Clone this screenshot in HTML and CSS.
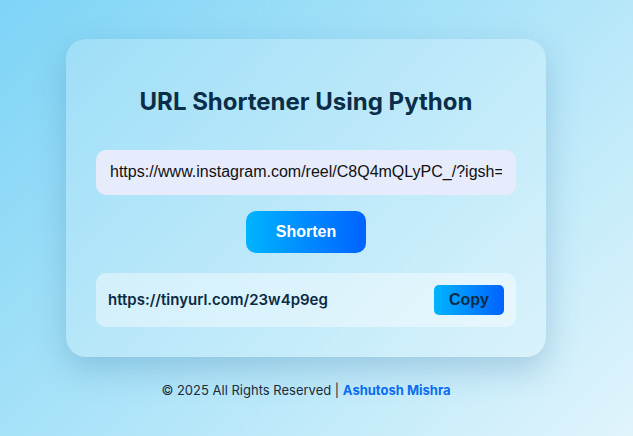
FILE: index.html
```html
<!DOCTYPE html>
<html lang="en">
<head>
  <meta charset="UTF-8" />
  <meta name="viewport" content="width=device-width, initial-scale=1.0" />
  <title>URL Shortener Using Python</title>
  <link rel="stylesheet" href="styles.css">
</head>
<body>
  <div class="container">
    <h2>URL Shortener Using Python</h2>
    <form id="shorten-form">
      <input type="text" id="longUrl" name="longUrl" value="https://www.instagram.com/reel/C8Q4mQLyPC_/?igsh=MWZ5b2" />
      <button type="submit" class="shorten-btn">Shorten</button>
    </form>
    <div class="result">
      <span class="short-url">https://tinyurl.com/23w4p9eg</span>
      <button class="copy-btn">Copy</button>
    </div>
  </div>

  <footer>
    <p>&copy; 2025 All Rights Reserved | <strong>Ashutosh Mishra</strong></p>
  </footer>
</body>
</html>
```

FILE: styles.css
```css
* {
  box-sizing: border-box;
}

body {
  margin: 0;
  padding-right: 21px;
  min-height: 100vh;
  display: flex;
  flex-direction: column;
  align-items: center;
  justify-content: center;
  font-family: 'Inter', 'Liberation Sans', sans-serif;
  background: linear-gradient(135deg, #7ed4f6 0%, #b3e6f9 55%, #e0f4fc 100%);
  color: #0b2a44;
}

.container {
  width: 480px;
  padding: 30px;
  background: rgba(255, 255, 255, 0.2);
  border-radius: 20px;
  box-shadow: 0 12px 32px rgba(40, 100, 150, 0.25);
}

.container h2 {
  margin: 18px 0 34px;
  font-size: 24px;
  font-weight: 700;
  text-align: center;
  color: #0a2d48;
}

#shorten-form {
  display: flex;
  flex-direction: column;
  align-items: center;
  gap: 16px;
}

#shorten-form input[type="text"] {
  width: 100%;
  height: 45px;
  padding: 0 14px;
  border: none;
  border-radius: 10px;
  background: #e6ecfb;
  font-family: 'Liberation Sans', Arial, sans-serif;
  font-size: 16px;
  color: #111;
  outline: none;
}

.shorten-btn,
.copy-btn {
  border: none;
  background: linear-gradient(90deg, #00b4fe, #0062ff);
  font-family: 'Liberation Sans', Arial, sans-serif;
  font-weight: 700;
  cursor: pointer;
}

.shorten-btn {
  width: 120px;
  height: 42px;
  border-radius: 10px;
  color: #ffffff;
  font-size: 16px;
}

.result {
  margin-top: 20px;
  height: 54px;
  display: flex;
  align-items: center;
  justify-content: space-between;
  padding: 0 12px;
  border-radius: 10px;
  background: rgba(255, 255, 255, 0.42);
}

.short-url {
  font-size: 15px;
  font-weight: 600;
  color: #0b2a44;
}

.copy-btn {
  width: 70px;
  height: 30px;
  border-radius: 5px;
  font-size: 16px;
  color: #0a2d48;
}

footer {
  margin-top: 25px;
  font-size: 13px;
  color: #1c2b3a;
}

footer p {
  margin: 0;
}

footer strong {
  color: #0a6cf0;
}
```
